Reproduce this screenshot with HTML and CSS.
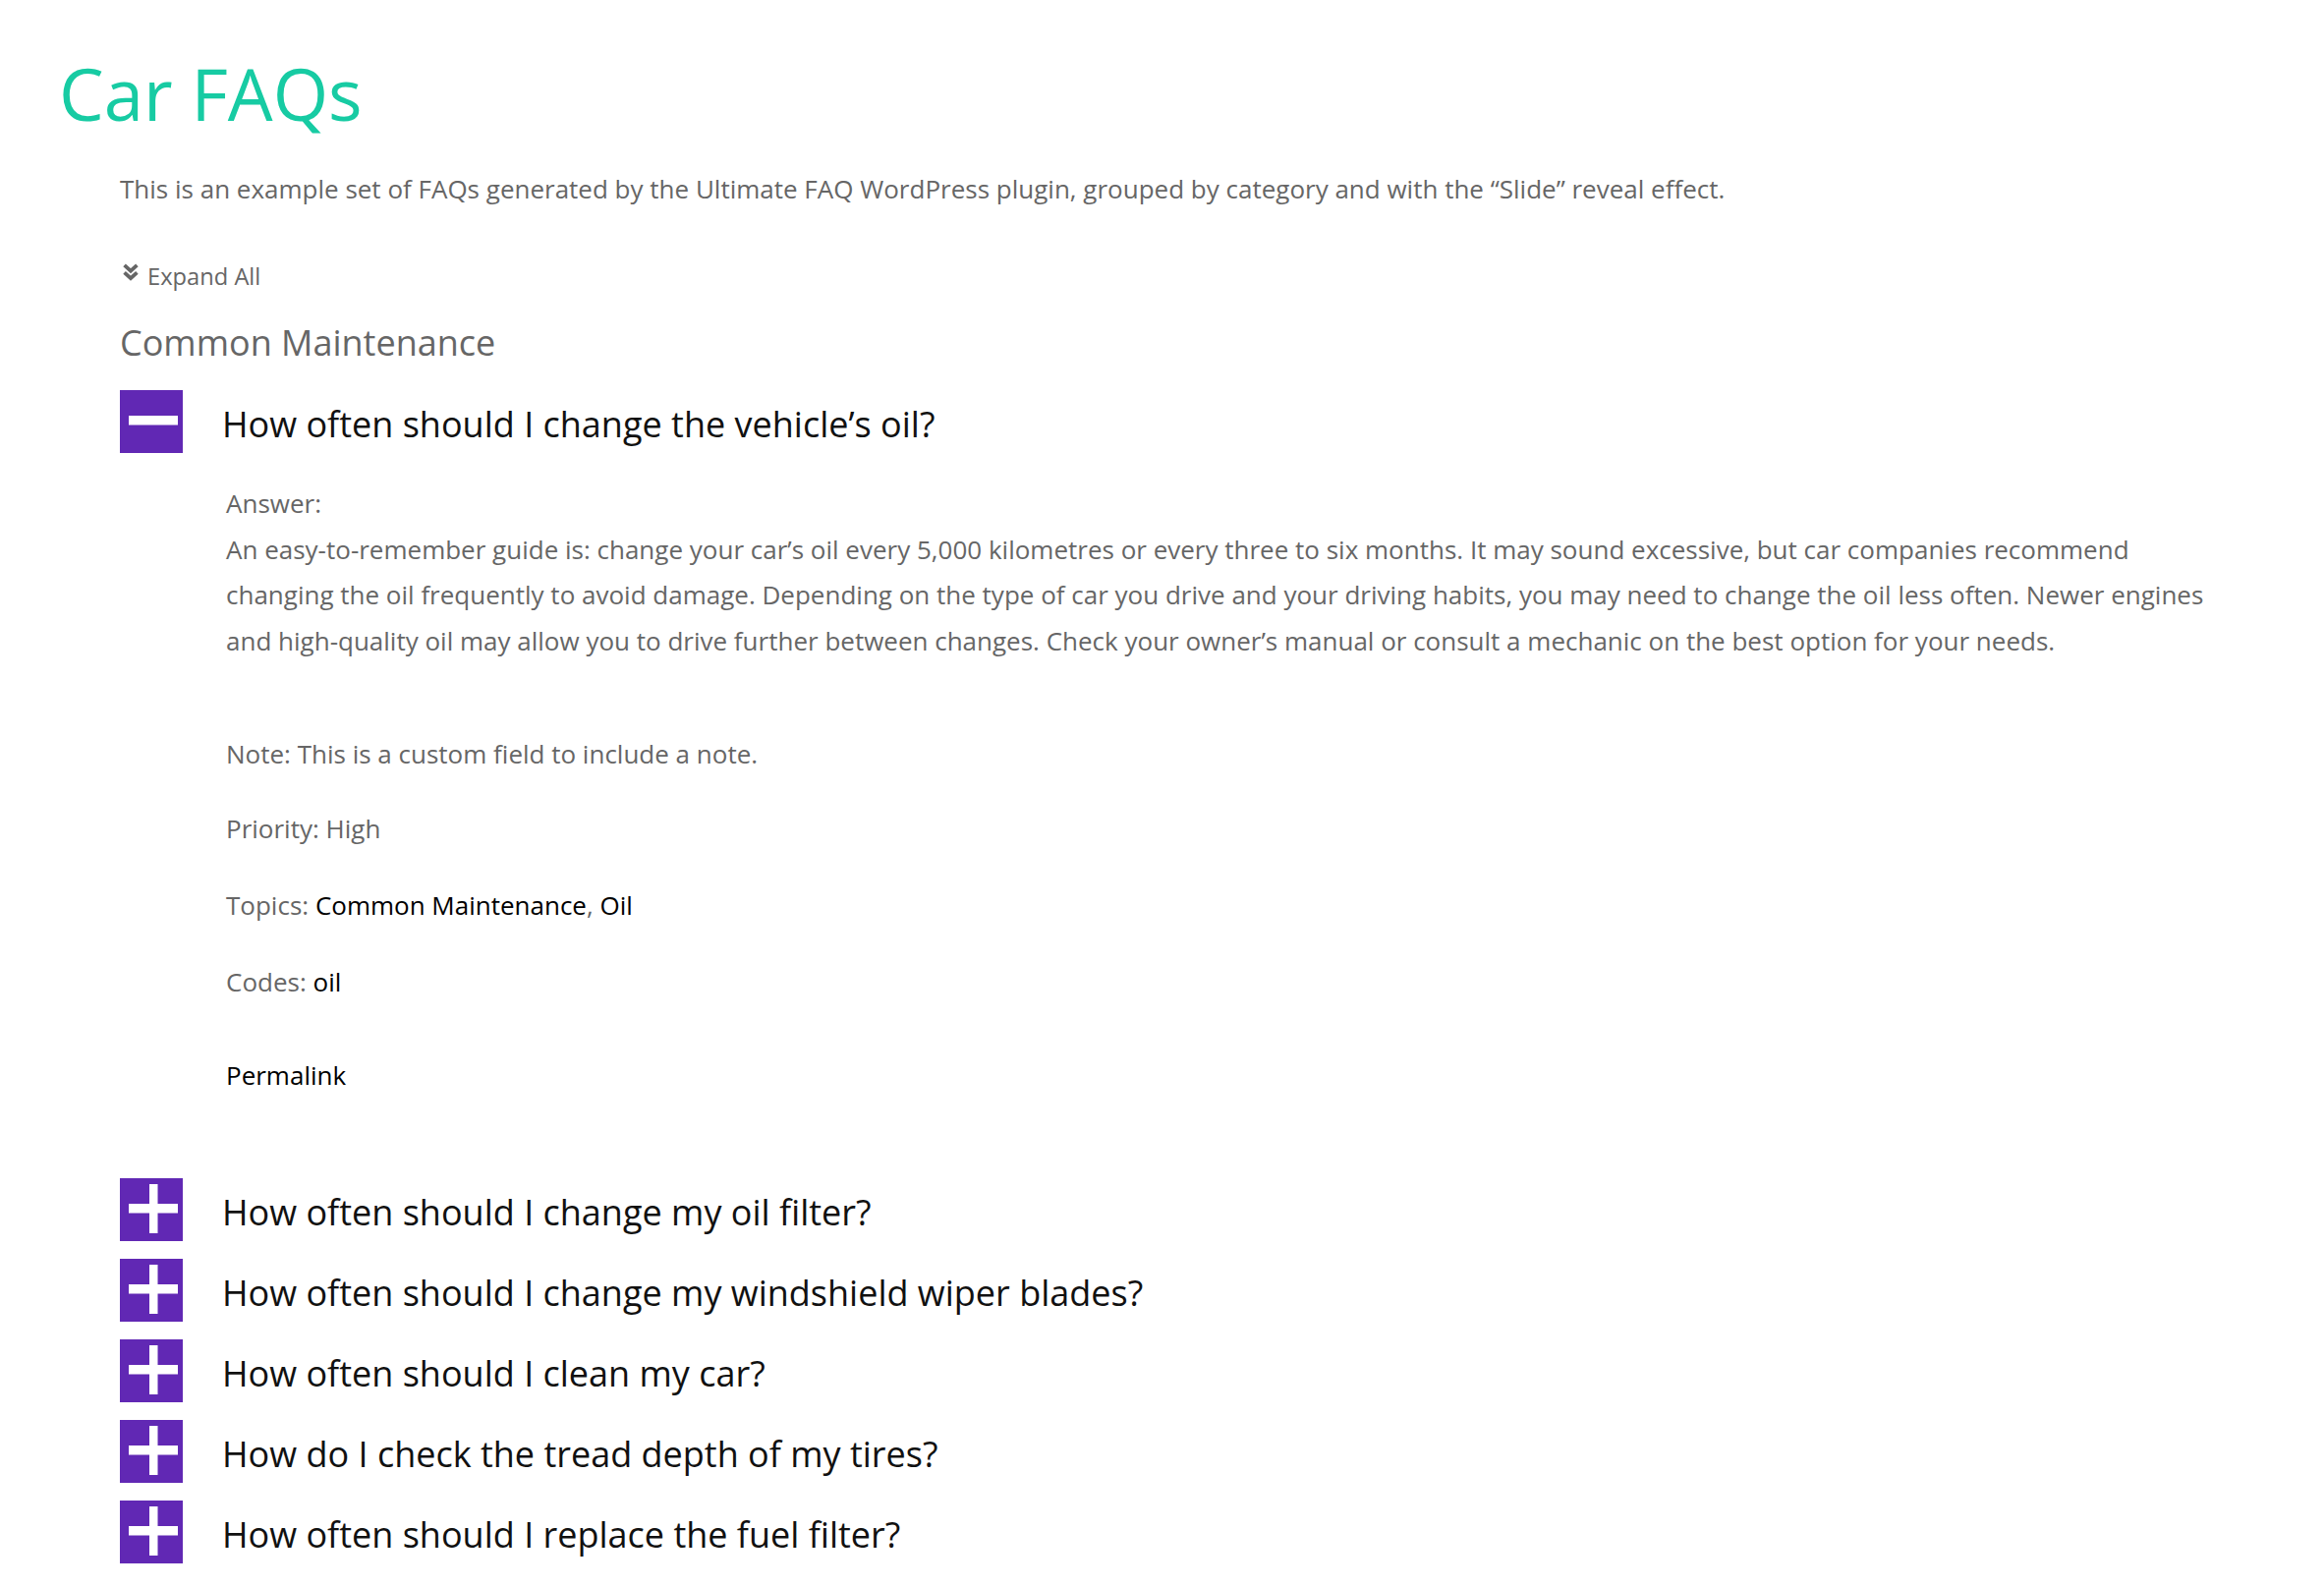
FILE: index.html
```html
<!DOCTYPE html>
<html lang="en">
<head>
<meta charset="utf-8">
<title>Car FAQs</title>
<link rel="stylesheet" href="styles.css">
</head>
<body>
<main class="page">
  <h1 class="title">Car FAQs</h1>
  <div class="content">
    <p class="intro">This is an example set of FAQs generated by the Ultimate FAQ WordPress plugin, grouped by category and with the “Slide” reveal effect.</p>
    <div class="expand-all">
      <svg class="chev" viewBox="0 0 16 18" width="16" height="18" aria-hidden="true">
        <polyline points="1.6,1.8 8,7.6 14.4,1.8" fill="none" stroke="#666" stroke-width="3.8" stroke-linejoin="miter"/>
        <polyline points="1.6,9.4 8,15.2 14.4,9.4" fill="none" stroke="#666" stroke-width="3.8" stroke-linejoin="miter"/>
      </svg>
      <span>Expand All</span>
    </div>
    <h2 class="category">Common Maintenance</h2>

    <div class="faq open">
      <div class="faq-head">
        <svg class="toggle" viewBox="0 0 64 64" width="64" height="64" aria-hidden="true">
          <rect width="64" height="64" fill="#6128b4"/>
          <rect x="9" y="26" width="50" height="9.5" fill="#fff"/>
        </svg>
        <div class="faq-q">How often should I change the vehicle’s oil?</div>
      </div>
      <div class="faq-body">
        <div class="answer">
          <div>Answer:</div>
          <div>An easy-to-remember guide is: change your car’s oil every 5,000 kilometres or every three to six months. It may sound excessive, but car companies recommend changing the oil frequently to avoid damage. Depending on the type of car you drive and your driving habits, you may need to change the oil less often. Newer engines and high-quality oil may allow you to drive further between changes. Check your owner’s manual or consult a mechanic on the best option for your needs.</div>
        </div>
        <div class="field note">Note: This is a custom field to include a note.</div>
        <div class="field priority">Priority: High</div>
        <div class="field topics">Topics: <a href="#">Common Maintenance</a>, <a href="#">Oil</a></div>
        <div class="field codes">Codes: <a href="#">oil</a></div>
        <div class="field permalink"><a href="#">Permalink</a></div>
      </div>
    </div>

    <div class="faq closed first-closed">
      <div class="faq-head">
        <svg class="toggle" viewBox="0 0 64 64" width="64" height="64" aria-hidden="true">
          <rect width="64" height="64" fill="#6128b4"/>
          <rect x="9" y="26" width="50" height="9.5" fill="#fff"/>
          <rect x="30" y="6" width="8.5" height="50" fill="#fff"/>
        </svg>
        <div class="faq-q">How often should I change my oil filter?</div>
      </div>
    </div>
    <div class="faq closed">
      <div class="faq-head">
        <svg class="toggle" viewBox="0 0 64 64" width="64" height="64" aria-hidden="true">
          <rect width="64" height="64" fill="#6128b4"/>
          <rect x="9" y="26" width="50" height="9.5" fill="#fff"/>
          <rect x="30" y="6" width="8.5" height="50" fill="#fff"/>
        </svg>
        <div class="faq-q">How often should I change my windshield wiper blades?</div>
      </div>
    </div>
    <div class="faq closed">
      <div class="faq-head">
        <svg class="toggle" viewBox="0 0 64 64" width="64" height="64" aria-hidden="true">
          <rect width="64" height="64" fill="#6128b4"/>
          <rect x="9" y="26" width="50" height="9.5" fill="#fff"/>
          <rect x="30" y="6" width="8.5" height="50" fill="#fff"/>
        </svg>
        <div class="faq-q">How often should I clean my car?</div>
      </div>
    </div>
    <div class="faq closed">
      <div class="faq-head">
        <svg class="toggle" viewBox="0 0 64 64" width="64" height="64" aria-hidden="true">
          <rect width="64" height="64" fill="#6128b4"/>
          <rect x="9" y="26" width="50" height="9.5" fill="#fff"/>
          <rect x="30" y="6" width="8.5" height="50" fill="#fff"/>
        </svg>
        <div class="faq-q">How do I check the tread depth of my tires?</div>
      </div>
    </div>
    <div class="faq closed">
      <div class="faq-head">
        <svg class="toggle" viewBox="0 0 64 64" width="64" height="64" aria-hidden="true">
          <rect width="64" height="64" fill="#6128b4"/>
          <rect x="9" y="26" width="50" height="9.5" fill="#fff"/>
          <rect x="30" y="6" width="8.5" height="50" fill="#fff"/>
        </svg>
        <div class="faq-q">How often should I replace the fuel filter?</div>
      </div>
    </div>
  </div>
</main>
</body>
</html>
```
FILE: styles.css
```css
html, body {
  margin: 0;
  padding: 0;
  background: #fff;
}
body {
  font-family: "Open Sans", "Noto Sans", sans-serif;
  color: #666;
}
.page {
  padding: 49px 0 0 60px;
}
.title {
  margin: 0;
  font-size: 72.5px;
  line-height: 92px;
  font-weight: 400;
  color: #17cba3;
}
.content {
  padding-left: 62px;
}
.intro {
  margin: 31px 0 0;
  font-size: 26px;
  line-height: 40px;
  color: #666;
}
.expand-all {
  margin-top: 52px;
  display: flex;
  align-items: flex-start;
  gap: 9px;
  font-size: 23.7px;
  line-height: 34px;
  color: #666;
}
.chev {
  display: block;
  margin-left: 3px;
  margin-top: 4px;
}
.category {
  margin: 28px 0 0;
  font-size: 36px;
  line-height: 46px;
  font-weight: 400;
  color: #666;
}
.faq {
  margin-top: 15px;
}
.faq.open {
  margin-top: 25px;
}
.faq.first-closed {
  margin-top: 81px;
}
.faq-head {
  display: flex;
  align-items: flex-start;
}
.toggle {
  display: block;
  flex: none;
}
.faq-q {
  margin-left: 40px;
  padding-top: 3px;
  font-size: 36px;
  line-height: 64px;
  color: #111;
}
.faq-body {
  margin-left: 108px;
  width: 2035px;
  font-size: 26px;
  line-height: 46.5px;
  color: #666;
}
.answer {
  margin-top: 25px;
}
.field {
  margin-top: 31.5px;
}
.field.note {
  margin-top: 69px;
}
.field.priority {
  margin-top: 29px;
}
.field.permalink {
  margin-top: 49px;
}
.faq-body a {
  color: #000;
  text-decoration: none;
}
```
